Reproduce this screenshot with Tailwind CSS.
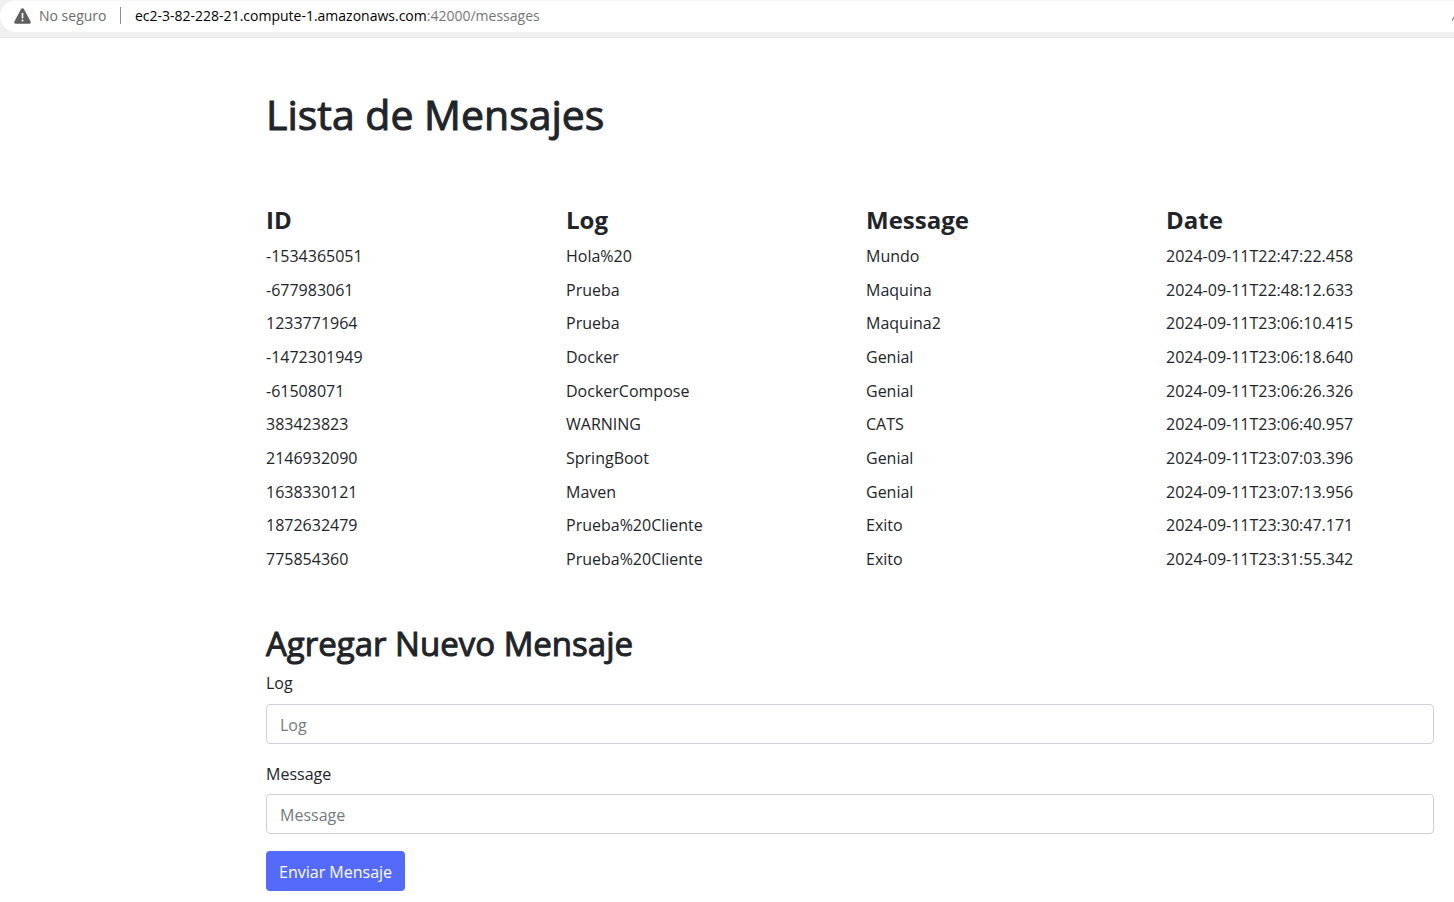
<!DOCTYPE html>
<html lang="es">
<head>
<meta charset="utf-8">
<meta name="viewport" content="width=device-width, initial-scale=1">
<title>Lista de Mensajes</title>
<script src="https://cdn.jsdelivr.net/npm/@tailwindcss/browser@4"></script>
</head>
<body class="min-h-screen overflow-x-hidden bg-white font-['Open_Sans','Noto_Sans',sans-serif] text-base text-[#212529]">
<header class="border-b border-[#e6e6e6] bg-[#f0f0f0] pb-[5px]">
  <div class="flex h-8 items-center overflow-hidden rounded-l-2xl border-t border-[#f7f7f7] bg-white pb-[2px] pl-[14px] text-sm">
    <svg class="h-4 w-[17px] shrink-0" viewBox="0 0 17 16" aria-hidden="true">
      <path d="M7.1 1.1a1.6 1.6 0 0 1 2.8 0l6.7 12.3a1.5 1.5 0 0 1-1.3 2.3H1.7a1.5 1.5 0 0 1-1.3-2.3z" fill="#5f5f5f"/>
      <path d="M8.5 5.6v4.2" stroke="#fff" stroke-width="1.6" stroke-linecap="round"/>
      <circle cx="8.5" cy="12.4" r="1" fill="#fff"/>
    </svg>
    <span class="ml-2 w-[81px] shrink-0 whitespace-nowrap text-[#6b6b6b]">No seguro</span>
    <span class="h-[17px] w-px shrink-0 bg-[#8a8a8a]"></span>
    <span class="ml-[14px] whitespace-nowrap text-black">ec2-3-82-228-21.compute-1.amazonaws.com<span class="text-[#757575]">:42000/messages</span></span>
    <svg class="mt-2 ml-auto h-2 w-[2px] shrink-0" viewBox="0 0 2 8" aria-hidden="true"><path d="M2 1L0 5" stroke="#666" fill="none"/></svg>
  </div>
</header>
<main class="pt-[50px] pb-[11px] pl-[254px]">
  <h1 class="pl-3 text-[41px] leading-[52px] [-webkit-text-stroke:1px_currentColor]">Lista de Mensajes</h1>
  <table class="mt-[61px] h-[375px] w-full table-fixed text-left">
    <thead>
      <tr class="h-[38px] text-2xl"><th class="px-3 font-bold">ID</th><th class="px-3 font-bold">Log</th><th class="px-3 font-bold">Message</th><th class="px-3 font-bold">Date</th></tr>
    </thead>
    <tbody>
      <tr><td class="px-3">-1534365051</td><td class="px-3">Hola%20</td><td class="px-3">Mundo</td><td class="px-3">2024-09-11T22:47:22.458</td></tr>
      <tr><td class="px-3">-677983061</td><td class="px-3">Prueba</td><td class="px-3">Maquina</td><td class="px-3">2024-09-11T22:48:12.633</td></tr>
      <tr><td class="px-3">1233771964</td><td class="px-3">Prueba</td><td class="px-3">Maquina2</td><td class="px-3">2024-09-11T23:06:10.415</td></tr>
      <tr><td class="px-3">-1472301949</td><td class="px-3">Docker</td><td class="px-3">Genial</td><td class="px-3">2024-09-11T23:06:18.640</td></tr>
      <tr><td class="px-3">-61508071</td><td class="px-3">DockerCompose</td><td class="px-3">Genial</td><td class="px-3">2024-09-11T23:06:26.326</td></tr>
      <tr><td class="px-3">383423823</td><td class="px-3">WARNING</td><td class="px-3">CATS</td><td class="px-3">2024-09-11T23:06:40.957</td></tr>
      <tr><td class="px-3">2146932090</td><td class="px-3">SpringBoot</td><td class="px-3">Genial</td><td class="px-3">2024-09-11T23:07:03.396</td></tr>
      <tr><td class="px-3">1638330121</td><td class="px-3">Maven</td><td class="px-3">Genial</td><td class="px-3">2024-09-11T23:07:13.956</td></tr>
      <tr><td class="px-3">1872632479</td><td class="px-3">Prueba%20Cliente</td><td class="px-3">Exito</td><td class="px-3">2024-09-11T23:30:47.171</td></tr>
      <tr><td class="px-3">775854360</td><td class="px-3">Prueba%20Cliente</td><td class="px-3">Exito</td><td class="px-3">2024-09-11T23:31:55.342</td></tr>
    </tbody>
  </table>
  <form class="mt-12 flex flex-col items-start pr-5 pl-3">
    <h2 class="text-[33px] leading-10 [-webkit-text-stroke:1px_currentColor]">Agregar Nuevo Mensaje</h2>
    <label for="log" class="mt-[7px] leading-6">Log</label>
    <input id="log" type="text" placeholder="Log" class="mt-[9px] h-10 w-full rounded border border-[#cfd0da] px-[13px] pt-[2px] placeholder:text-[#757a80]">
    <label for="message" class="mt-[18px] leading-6">Message</label>
    <input id="message" type="text" placeholder="Message" class="mt-2 h-10 w-full rounded border border-[#cfd0da] px-[13px] pt-[2px] placeholder:text-[#757a80]">
    <button type="submit" class="mt-[17px] h-10 rounded bg-[#536afb] px-[13px] pt-[2px] text-white">Enviar Mensaje</button>
  </form>
</main>
</body>
</html>
